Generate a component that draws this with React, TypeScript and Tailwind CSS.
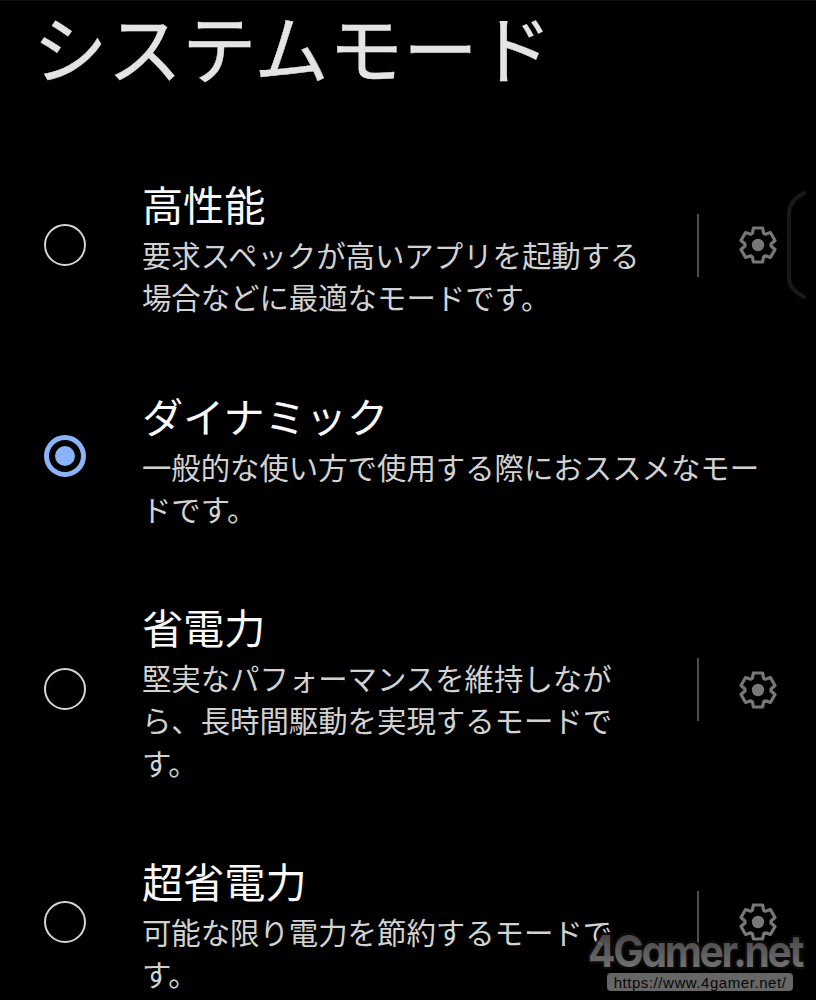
interface Mode {
  title: string;
  lines: string[];
  selected?: boolean;
  settings?: boolean;
}

const modes: Mode[] = [
  {
    title: "高性能",
    lines: ["要求スペックが高いアプリを起動する", "場合などに最適なモードです。"],
    settings: true,
  },
  {
    title: "ダイナミック",
    lines: ["一般的な使い方で使用する際におススメなモー", "ドです。"],
    selected: true,
  },
  {
    title: "省電力",
    lines: ["堅実なパフォーマンスを維持しなが", "ら、長時間駆動を実現するモードで", "す。"],
    settings: true,
  },
  {
    title: "超省電力",
    lines: ["可能な限り電力を節約するモードで", "す。"],
    settings: true,
  },
];

// One tooth of the gear, repeated every 60 degrees
const tooth = [[-5.6, -11.8], [-4.6, -17], [4.6, -17], [5.6, -11.8]];
const gearPoints = [0, 60, 120, 180, 240, 300]
  .flatMap((deg) => {
    const a = (deg * Math.PI) / 180;
    return tooth.map(([x, y]) => [
      x * Math.cos(a) - y * Math.sin(a),
      x * Math.sin(a) + y * Math.cos(a),
    ]);
  })
  .map(([x, y]) => `${x.toFixed(2)},${y.toFixed(2)}`)
  .join(" ");

function Gear() {
  return (
    <svg viewBox="-20 -20 40 40" className="w-10 h-10 shrink-0 text-[#777777]">
      <polygon points={gearPoints} fill="none" stroke="currentColor" strokeWidth="3.2" strokeLinejoin="round" />
      <circle r="6.2" fill="currentColor" />
    </svg>
  );
}

function Radio({ selected }: { selected?: boolean }) {
  if (selected) {
    return (
      <span className="w-[42px] h-[42px] shrink-0 rounded-full border-[5px] border-[#8ab4f8] flex items-center justify-center">
        <span className="w-5 h-5 rounded-full bg-[#8ab4f8]" />
      </span>
    );
  }
  return <span className="w-[42px] h-[42px] shrink-0 rounded-full border-2 border-[#d6d6d6]" />;
}

function ModeRow({ mode }: { mode: Mode }) {
  return (
    <div className="flex items-center">
      <div className="w-[98.4px] pb-px flex shrink-0">
        <Radio selected={mode.selected} />
      </div>
      <div className="flex-1 whitespace-nowrap">
        <h2 className="text-[41.2px] leading-[60px] text-[#f8f8f8]">{mode.title}</h2>
        <p className="text-[29.4px] leading-[42.3px] text-[#d2d2d2]">
          {mode.lines.map((line) => (
            <span key={line} className="block">{line}</span>
          ))}
        </p>
      </div>
      {mode.settings && (
        <div className="flex items-center pr-[38px]">
          <span className="w-0.5 h-[63px] bg-[#4c4c4c] mr-[39px]" />
          <Gear />
        </div>
      )}
    </div>
  );
}

export default function App() {
  return (
    <main className="relative w-[816px] h-[1000px] overflow-hidden bg-black border-t border-[#101010] font-['Noto_Sans_CJK_JP',sans-serif]">
      <h1 className="pl-[33px] h-[172.2px] text-[74.5px] leading-[90px] text-[#e4e4e4] whitespace-nowrap [-webkit-text-stroke:0.4px_#e4e4e4]">システムモード</h1>

      <div className="pl-[43.5px] flex flex-col gap-[66.9px]">
        {modes.map((mode) => (
          <ModeRow key={mode.title} mode={mode} />
        ))}
      </div>

      {/* Edge panel handle */}
      <svg viewBox="0 0 22 112" className="absolute left-[785px] top-[188px] w-[22px] h-28">
        <path d="M19 4Q4 12 4 24V89Q4 100 19 108" fill="none" stroke="#191919" strokeWidth="4" strokeLinecap="round" />
      </svg>

      {/* Watermark */}
      <div className="absolute left-[584px] top-[926px] w-[226px]">
        <svg viewBox="0 0 226 46" className="block w-[226px] h-[46px] opacity-90">
          <defs>
            <linearGradient id="logo" gradientUnits="userSpaceOnUse" x1="0" y1="6" x2="0" y2="42">
              <stop offset="0.1" stopColor="#505050" />
              <stop offset="0.9" stopColor="#7a7a7a" />
            </linearGradient>
          </defs>
          <text
            x="4"
            y="40"
            textLength="214"
            lengthAdjust="spacingAndGlyphs"
            fill="url(#logo)"
            stroke="#100c0c"
            strokeWidth="5"
            strokeLinejoin="round"
            className="font-['Inter',sans-serif] font-bold text-[44px] tracking-[-2.5px] [paint-order:stroke] [font-feature-settings:'cv11']"
          >
            4Gamer.net
          </text>
        </svg>
        <div className="ml-[23px] w-[186px] h-[18px] rounded bg-[#666666] flex items-center justify-center font-['Liberation_Sans',sans-serif] text-[15px] leading-none text-[#080808] tracking-[0.55px]">
          https://www.4gamer.net/
        </div>
      </div>
    </main>
  );
}
